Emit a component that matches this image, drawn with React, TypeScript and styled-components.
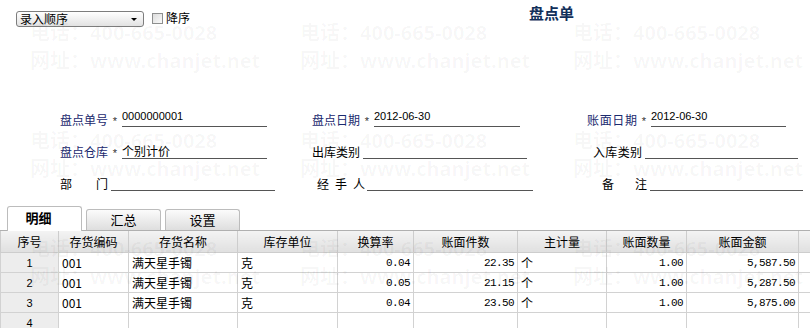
import styled, { createGlobalStyle } from "styled-components";

type stockRow = {
    no: number;
    code: string;
    name: string;
    unit: string;
    rate: string;
    pieces: string;
    mainUnit: string;
    qty: string;
    amount: string;
}

const rows: stockRow[] = [
    { no: 1, code: "001", name: "满天星手镯", unit: "克", rate: "0.04", pieces: "22.35", mainUnit: "个", qty: "1.00", amount: "5,587.50" },
    { no: 2, code: "001", name: "满天星手镯", unit: "克", rate: "0.05", pieces: "21.15", mainUnit: "个", qty: "1.00", amount: "5,287.50" },
    { no: 3, code: "001", name: "满天星手镯", unit: "克", rate: "0.04", pieces: "23.50", mainUnit: "个", qty: "1.00", amount: "5,875.00" },
    { no: 4, code: "", name: "", unit: "", rate: "", pieces: "", mainUnit: "", qty: "", amount: "" },
];

const columns = [
    { title: "序号", width: 58 },
    { title: "存货编码", width: 70 },
    { title: "存货名称", width: 109 },
    { title: "库存单位", width: 100 },
    { title: "换算率", width: 76 },
    { title: "账面件数", width: 104 },
    { title: "主计量", width: 89 },
    { title: "账面数量", width: 80 },
    { title: "账面金额", width: 112 },
    { title: "", width: 80 },
];

const NAVY = "#1b2a6e";

const StockCheck = () => {
    return (
        <Page>
            <GlobalStyle />
            <TopBar>
                <Select>
                    <SelectText>录入顺序</SelectText>
                    <SelectArrow />
                </Select>
                <CheckBox />
                <CheckLabel>降序</CheckLabel>
                <Title>盘点单</Title>
            </TopBar>

            <Form>
                <FieldRow>
                    <Field $indent={60}>
                        <Label $width={48} $color={NAVY}>盘点单号</Label>
                        <Star>*</Star>
                        <Line $width={145} $gap={0}><Value>0000000001</Value></Line>
                    </Field>
                    <Field $indent={12}>
                        <Label $width={48} $color={NAVY}>盘点日期</Label>
                        <Star>*</Star>
                        <Line $width={146} $gap={0}><Value>2012-06-30</Value></Line>
                    </Field>
                    <Field $indent={17}>
                        <Label $width={50} $color={NAVY}>账面日期</Label>
                        <Star>*</Star>
                        <Line $width={135} $gap={0}><Value>2012-06-30</Value></Line>
                    </Field>
                </FieldRow>
                <FieldRow>
                    <Field $indent={60}>
                        <Label $width={48} $color={NAVY}>盘点仓库</Label>
                        <Star>*</Star>
                        <Line $width={145} $gap={0}><CjkValue>个别计价</CjkValue></Line>
                    </Field>
                    <Field $indent={12}>
                        <Label $width={48} $color="#000">出库类别</Label>
                        <Line $width={164} $gap={3} />
                    </Field>
                    <Field $indent={23}>
                        <Label $width={49} $color="#000">入库类别</Label>
                        <Line $width={153} $gap={3} />
                    </Field>
                </FieldRow>
                <FieldRow>
                    <Field $indent={60}>
                        <Label $width={48} $color="#000">部门</Label>
                        <Line $width={164} $gap={3} />
                    </Field>
                    <Field $indent={17}>
                        <Label $width={48} $color="#000">经手人</Label>
                        <Line $width={166} $gap={2} />
                    </Field>
                    <Field $indent={32}>
                        <Label $width={45} $color="#000">备注</Label>
                        <Line $width={153} $gap={3} />
                    </Field>
                </FieldRow>
            </Form>

            <TabStrip>
                <Tab $active>明细</Tab>
                <Tab>汇总</Tab>
                <Tab>设置</Tab>
            </TabStrip>

            <TableWrap>
                <Grid>
                    <colgroup>
                        {columns.map((c, i) => <col key={i} style={{ width: c.width }} />)}
                    </colgroup>
                    <thead>
                        <tr>
                            {columns.map((c, i) => <HeadCell key={i}>{c.title}</HeadCell>)}
                        </tr>
                    </thead>
                    <tbody>
                        {rows.map((r) => (
                            <tr key={r.no}>
                                <NoCell>{r.no}</NoCell>
                                <TextCell>{r.code}</TextCell>
                                <TextCell>{r.name}</TextCell>
                                <TextCell>{r.unit}</TextCell>
                                <NumCell>{r.rate}</NumCell>
                                <NumCell>{r.pieces}</NumCell>
                                <TextCell>{r.mainUnit}</TextCell>
                                <NumCell>{r.qty}</NumCell>
                                <NumCell>{r.amount}</NumCell>
                                <TextCell />
                            </tr>
                        ))}
                    </tbody>
                </Grid>
            </TableWrap>

            {/* faint watermark lying over the whole form */}
            <Watermark>
                {Array.from({ length: 9 }).map((_, i) => (
                    <MarkBlock key={i}>
                        <div>电话：400-665-0028</div>
                        <div>网址：www.chanjet.net</div>
                    </MarkBlock>
                ))}
            </Watermark>
        </Page>
    );
}

export default StockCheck;

const GlobalStyle = createGlobalStyle`
    body {
        margin: 0;
        background: #fff;
        color: #000;
        font-family: "Noto Sans CJK SC", "Noto Sans", sans-serif;
        font-size: 12px;
    }
`

const Page = styled.div`
    position: relative;
    width: 810px;
    height: 328px;
    overflow: hidden;
`

const TopBar = styled.div`
    display: flex;
    align-items: flex-start;
    height: 30px;
    padding: 4px 0 0 16px;
    box-sizing: border-box;
`

const Select = styled.div`
    display: flex;
    align-items: center;
    width: 128px;
    height: 16px;
    margin-top: 7px;
    box-sizing: border-box;
    border: 1px solid #7d7d7d;
    border-radius: 3px;
    background: linear-gradient(#ffffff, #e2e2e2);
    padding: 0 6px 0 3px;
`

const SelectText = styled.span`
    flex: 1;
    font-size: 12px;
    line-height: 14px;
`

const SelectArrow = styled.span`
    width: 0;
    height: 0;
    border-left: 3px solid transparent;
    border-right: 3px solid transparent;
    border-top: 3px solid #000;
`

const CheckBox = styled.span`
    width: 11px;
    height: 11px;
    margin: 9px 0 0 8px;
    box-sizing: border-box;
    border: 1px solid #8e8f8f;
    background: linear-gradient(135deg, #dcdcdc, #fafafa);
`

const CheckLabel = styled.span`
    margin: 6px 0 0 3px;
    font-size: 12px;
    line-height: 16px;
`

const Title = styled.div`
    margin-left: 339px;
    font-size: 15px;
    font-weight: bold;
    line-height: 18px;
    color: #12305a;
`

const Form = styled.div`
    margin-top: 65px;
`

const FieldRow = styled.div`
    display: grid;
    grid-template-columns: 300px 270px 1fr;
    height: 32px;
    align-items: end;
`

const Field = styled.div<{ $indent: number }>`
    display: flex;
    align-items: flex-end;
    padding-left: ${p => p.$indent}px;
`

const Label = styled.span<{ $width: number; $color: string }>`
    display: inline-block;
    width: ${p => p.$width}px;
    color: ${p => p.$color};
    font-size: 12px;
    line-height: 15px;
    white-space: nowrap;
    text-align: justify;
    text-align-last: justify;
`

const Star = styled.span`
    width: 14px;
    text-align: center;
    font-family: "Liberation Sans", sans-serif;
    font-size: 11px;
    line-height: 11px;
    color: #333;
`

const Line = styled.div<{ $width: number; $gap: number }>`
    width: ${p => p.$width}px;
    margin-left: ${p => p.$gap}px;
    height: 15px;
    border-bottom: 1px solid #555;
    display: flex;
    align-items: flex-end;
`

const Value = styled.span`
    font-family: "Liberation Sans", sans-serif;
    font-size: 11px;
    line-height: 13px;
    margin-bottom: 3px;
`

const CjkValue = styled.span`
    font-size: 12px;
    line-height: 15px;
`

const TabStrip = styled.div`
    display: flex;
    align-items: flex-end;
    gap: 4px;
    margin-top: 14px;
    height: 25px;
    padding-left: 7px;
    border-bottom: 1px solid #b0b0b0;
`

const Tab = styled.div<{ $active?: boolean }>`
    width: 75px;
    height: ${p => p.$active ? 25 : 21}px;
    margin-bottom: ${p => p.$active ? -1 : 0}px;
    box-sizing: border-box;
    border: 1px solid #bcbcbc;
    border-bottom: none;
    border-radius: 3px 3px 0 0;
    background: ${p => p.$active ? "#fff" : "linear-gradient(#fbfbfb, #dedede)"};
    font-size: 13px;
    font-weight: ${p => p.$active ? "bold" : "normal"};
    line-height: ${p => p.$active ? 22 : 20}px;
    text-align: center;
    padding-right: ${p => p.$active ? 12 : 0}px;
`

const TableWrap = styled.div`
    width: 810px;
    overflow: hidden;
`

const Grid = styled.table`
    width: 878px;
    table-layout: fixed;
    border-collapse: collapse;
`

const HeadCell = styled.th`
    height: 21px;
    padding: 0;
    font-size: 12px;
    font-weight: normal;
    text-align: center;
    background: linear-gradient(#f3f3f3, #e0e0e0);
    border: 1px solid #cdcdcd;
    border-top: none;
`

const BodyCell = styled.td`
    height: 19px;
    padding: 0 3px;
    border: 1px solid #d2d2d2;
    white-space: nowrap;
    overflow: hidden;
`

const NoCell = styled(BodyCell)`
    text-align: center;
    background: #ededed;
    font-family: "Liberation Sans", sans-serif;
    font-size: 11px;
`

const TextCell = styled(BodyCell)`
    font-size: 12px;
`

const NumCell = styled(BodyCell)`
    text-align: right;
    font-family: "Liberation Mono", monospace;
    font-size: 11px;
    letter-spacing: -0.6px;
`

const Watermark = styled.div`
    position: absolute;
    inset: 0;
    pointer-events: none;
    display: grid;
    grid-template-columns: 270px 273px 267px;
    grid-auto-rows: 108px;
    padding: 19px 0 0 30px;
    color: rgba(0, 0, 0, 0.035);
    font-family: "Noto Sans", "Noto Sans CJK SC", sans-serif;
    font-size: 20px;
    font-weight: bold;
    line-height: 28px;
`

const MarkBlock = styled.div`
    white-space: nowrap;
`
